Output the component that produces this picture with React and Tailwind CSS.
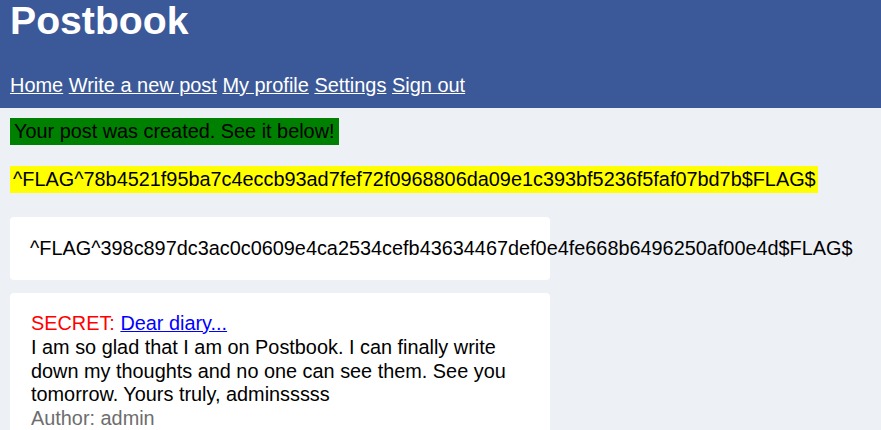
export default function App() {
  return (
    <div className="min-h-[430px] bg-[#edf0f5] text-[19.86px] text-black font-['Liberation_Sans',Arial,sans-serif] leading-[23px]">
      <div className="bg-[#3b5998] px-[10px] pt-[1px] pb-[11px] text-white">
        <h1 className="m-0 text-[39.2px] font-bold leading-[40px]">Postbook</h1>
        <nav className="mt-[33px] text-[19.96px]">
          <a href="#" className="text-white underline">Home</a>{' '}
          <a href="#" className="text-white underline">Write a new post</a>{' '}
          <a href="#" className="text-white underline">My profile</a>{' '}
          <a href="#" className="text-white underline">Settings</a>{' '}
          <a href="#" className="text-white underline">Sign out</a>
        </nav>
      </div>

      <div className="px-[10px]">
        <div className="mt-[10px]">
          <span className="inline-block bg-[#008000] px-[4px] py-[2px]">Your post was created. See it below!</span>
        </div>
        <div className="mt-[21px]">
          <span className="inline-block bg-[#ffff00] pl-[3px] pr-[2px] py-[2px]">^FLAG^78b4521f95ba7c4eccb93ad7fef72f0968806da09e1c393bf5236f5faf07bd7b$FLAG$</span>
        </div>

        <div className="mt-[24px] w-[540px] rounded-[4px] bg-white p-[20px]">
          <p className="whitespace-nowrap">^FLAG^398c897dc3ac0c0609e4ca2534cefb43634467def0e4fe668b6496250af00e4d$FLAG$</p>
        </div>

        <div className="mt-[13px] w-[540px] rounded-[4px] bg-white pl-[21px] pr-[19px] pt-[19px] pb-[20px] leading-[23.75px]">
          <p>
            <span className="text-[#ff0000]">SECRET: </span>
            <a href="#" className="text-[#0000ff] underline">Dear diary...</a>
          </p>
          <p>I am so glad that I am on Postbook. I can finally write down my thoughts and no one can see them. See you tomorrow. Yours truly, adminsssss</p>
          <p className="text-[#6d6d6d]">Author: admin</p>
        </div>
      </div>
    </div>
  );
}
